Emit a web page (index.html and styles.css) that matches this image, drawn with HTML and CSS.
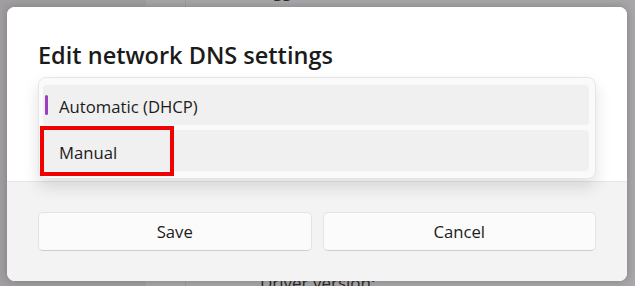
FILE: index.html
```html
<!DOCTYPE html>
<html lang="en">
<head>
<meta charset="utf-8">
<title>Edit network DNS settings</title>
<link rel="stylesheet" href="styles.css">
</head>
<body>
<div class="backdrop">
  <div class="nav-pane"></div>
  <div class="pane-divider"></div>
  <span class="bg-top-text">gg</span>
  <span class="bg-bottom-text">Driver version:</span>
</div>
<div class="dialog">
  <div class="dialog-body">
    <h1 class="dialog-title">Edit network DNS settings</h1>
    <div class="flyout">
      <div class="flyout-item is-selected"><span class="pill"></span>Automatic (DHCP)</div>
      <div class="flyout-item">Manual</div>
      <div class="highlight-box"></div>
    </div>
  </div>
  <div class="dialog-footer">
    <button class="btn">Save</button>
    <button class="btn">Cancel</button>
  </div>
</div>
</body>
</html>
```
FILE: styles.css
```css
html, body {
  margin: 0;
  padding: 0;
}
body {
  width: 635px;
  height: 286px;
  overflow: hidden;
  position: relative;
  background: #a8a6a8;
  font-family: "Open Sans", "Noto Sans", sans-serif;
  color: #1b1b1b;
}
.backdrop {
  position: absolute;
  inset: 0;
}
.nav-pane {
  position: absolute;
  left: 0;
  top: 0;
  width: 146px;
  height: 286px;
  background: #a19ea2;
}
.pane-divider {
  position: absolute;
  left: 185px;
  top: 0;
  width: 1px;
  height: 286px;
  background: #9c9a9c;
}
.bg-top-text {
  position: absolute;
  left: 273px;
  top: -21px;
  font-size: 17px;
  color: #2a2a2a;
}
.bg-bottom-text {
  position: absolute;
  left: 260px;
  top: 271px;
  font-size: 17px;
  color: #2a2a2a;
}
.dialog {
  position: relative;
  z-index: 1;
  margin: 7px 0 0 7px;
  width: 620px;
  height: 274px;
  border-radius: 8px;
  overflow: hidden;
  background: #ffffff;
  box-shadow: 0 0 10px rgba(0, 0, 0, 0.22);
  display: flex;
  flex-direction: column;
}
.dialog-body {
  position: relative;
  height: 174px;
  padding: 34px 31px 0;
  box-sizing: border-box;
  background: #ffffff;
}
.dialog-title {
  margin: 0;
  font-size: 23.5px;
  line-height: 28px;
  font-weight: 600;
  color: #1b1b1b;
}
.flyout {
  position: absolute;
  z-index: 2;
  left: 31px;
  top: 70px;
  width: 558px;
  height: 102px;
  box-sizing: border-box;
  padding: 7px 6px 7px 4px;
  border: 1px solid #e6e6e6;
  border-radius: 8px;
  background: #fafafa;
  box-shadow: 0 8px 16px rgba(0, 0, 0, 0.12);
  display: flex;
  flex-direction: column;
  gap: 5px;
}
.flyout-item {
  position: relative;
  height: 40px;
  flex: 0 0 40px;
  box-sizing: border-box;
  border-radius: 4px;
  background: #f0f0f0;
  padding: 3px 0 0 16px;
  display: flex;
  align-items: center;
  font-size: 16.7px;
  color: #1b1b1b;
}
.flyout-item + .flyout-item {
  height: 41px;
  flex-basis: 41px;
}
.pill {
  position: absolute;
  left: 2px;
  top: 10px;
  width: 3px;
  height: 20px;
  border-radius: 2px;
  background: #9a3fbe;
}
.highlight-box {
  position: absolute;
  left: 1px;
  top: 48px;
  width: 134px;
  height: 50px;
  box-sizing: border-box;
  border: 4px solid #f00000;
}
.dialog-footer {
  flex: 1;
  background: #f3f3f3;
  border-top: 1px solid #e5e5e5;
  padding: 30px 31px 0;
  display: grid;
  grid-template-columns: 1fr 1fr;
  gap: 11px;
  align-content: start;
}
.btn {
  height: 39px;
  border: 1px solid #e3e3e3;
  border-bottom-color: #cdcdcd;
  border-radius: 5px;
  background: #fbfbfb;
  font-family: inherit;
  font-size: 16.7px;
  color: #1b1b1b;
  padding: 0;
}
```
